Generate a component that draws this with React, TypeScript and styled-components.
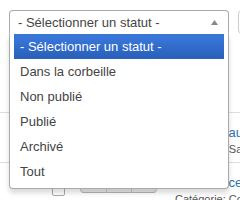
import styled, { createGlobalStyle } from "styled-components";

const GlobalStyle = createGlobalStyle`
  html, body {
    margin: 0;
    padding: 0;
    background: #fff;
    overflow: hidden;
  }
  body {
    font-family: "Liberation Sans", Arial, sans-serif;
    font-size: 13px;
    color: #333;
  }
`;

const Page = styled.div`
  width: 240px;
  height: 200px;
  padding: 10px 0 0 9px;
  box-sizing: border-box;
  overflow: hidden;
  position: relative;
`;

const Toolbar = styled.div`
  display: flex;
  gap: 9px;
  position: relative;
  z-index: 2;
`;

const SelectWrap = styled.div`
  position: relative;
  width: 220px;
  flex: none;
`;

const SelectBox = styled.div`
  box-sizing: border-box;
  height: 24px;
  border: 1px solid #aaa;
  border-bottom-color: #fff;
  border-radius: 4px 4px 0 0;
  background: #fff;
  display: flex;
  align-items: center;
  justify-content: space-between;
  padding: 0 10px 0 8px;
  color: #444;
  font-size: 13px;
`;

const Drop = styled.div`
  position: absolute;
  top: 100%;
  left: 0;
  width: 100%;
  box-sizing: border-box;
  background: #fff;
  border: 1px solid #aaa;
  border-top: 0;
  border-radius: 0 0 4px 4px;
  box-shadow: 0 4px 5px rgba(0, 0, 0, 0.15);
`;

const Results = styled.ul`
  list-style: none;
  margin: 0 4px 4px 0;
  padding: 0 0 0 4px;
`;

const Option = styled.li<{ $active?: boolean }>`
  padding: 5px 6px;
  line-height: 15px;
  font-size: 13px;
  color: ${(p) => (p.$active ? "#fff" : "#444")};
  background: ${(p) =>
    p.$active ? "linear-gradient(#3875d7 20%, #2a62bc 90%)" : "transparent"};
  white-space: nowrap;
`;

const OtherSelect = styled.div`
  flex: none;
  width: 90px;
  height: 24px;
  box-sizing: border-box;
  border: 1px solid #ccc;
  border-radius: 4px;
  background: #fff;
`;

const Table = styled.div`
  margin: 20px 0 0 -9px;
  width: 320px;
`;

const HeadRow = styled.div`
  height: 59px;
  border-bottom: 1px solid #ddd;
  box-sizing: border-box;
`;

const Row = styled.div`
  display: grid;
  grid-template-columns: 52px 28px 95px 1fr;
  height: 50px;
  border-bottom: 1px solid #ddd;
  box-sizing: border-box;
`;

const CheckCell = styled.div`
  grid-column: 2;
  padding-top: 20px;
`;

const Checkbox = styled.span`
  display: block;
  width: 13px;
  height: 13px;
  box-sizing: border-box;
  border: 1px solid #aaa;
  border-radius: 2px;
  background: #fff;
`;

const StatusCell = styled.div`
  padding-top: 8px;
`;

const BtnGroup = styled.div`
  display: flex;
  width: 77px;
`;

const Btn = styled.span<{ $w: number }>`
  width: ${(p) => p.$w}px;
  height: 22px;
  box-sizing: border-box;
  display: flex;
  align-items: center;
  justify-content: center;
  border: 1px solid #c5c5c5;
  border-bottom-color: #b3b3b3;
  margin-left: -1px;
  background: linear-gradient(#fff, #e6e6e6);
  font-size: 10px;
  color: #555;

  &:first-child {
    margin-left: 0;
    border-radius: 4px 0 0 4px;
  }
  &:last-child {
    border-radius: 0 4px 4px 0;
  }
`;

const TitleCell = styled.div`
  padding-top: 11px;
  white-space: nowrap;
`;

const TitleLink = styled.a`
  display: block;
  color: #3071a9;
  font-size: 13px;
  line-height: 18px;
  text-decoration: none;
`;

const Small = styled.div`
  font-size: 11px;
  line-height: 14px;
  color: #555;
`;

const Caret = () => (
  <svg width="7" height="5" viewBox="0 0 7 5">
    <path d="M0 5 L3.5 0 L7 5 Z" fill="#888" />
  </svg>
);

const options = [
  "- Sélectionner un statut -",
  "Dans la corbeille",
  "Non publié",
  "Publié",
  "Archivé",
  "Tout",
];

const rows = [
  { title: "Le nouveau site", cat: "Catégorie: Sans catégorie" },
  { title: "Conférence annuelle", cat: "Catégorie: Communiqués" },
];

const App = () => {
  return (
    <>
      <GlobalStyle />
      <Page>
        <Toolbar>
          <SelectWrap>
            <SelectBox>
              <span>- Sélectionner un statut -</span>
              <Caret />
            </SelectBox>
            <Drop>
              <Results>
                {options.map((o, i) => (
                  <Option key={o} $active={i === 0}>
                    {o}
                  </Option>
                ))}
              </Results>
            </Drop>
          </SelectWrap>
          <OtherSelect />
        </Toolbar>
        <Table>
          <HeadRow />
          {rows.map((r) => (
            <Row key={r.title}>
              <CheckCell>
                <Checkbox />
              </CheckCell>
              <StatusCell>
                <BtnGroup>
                  <Btn $w={27}>✓</Btn>
                  <Btn $w={26}>☆</Btn>
                  <Btn $w={26}>▾</Btn>
                </BtnGroup>
              </StatusCell>
              <TitleCell>
                <TitleLink href="#">{r.title}</TitleLink>
                <Small>{r.cat}</Small>
              </TitleCell>
            </Row>
          ))}
        </Table>
      </Page>
    </>
  );
};

export default App;
